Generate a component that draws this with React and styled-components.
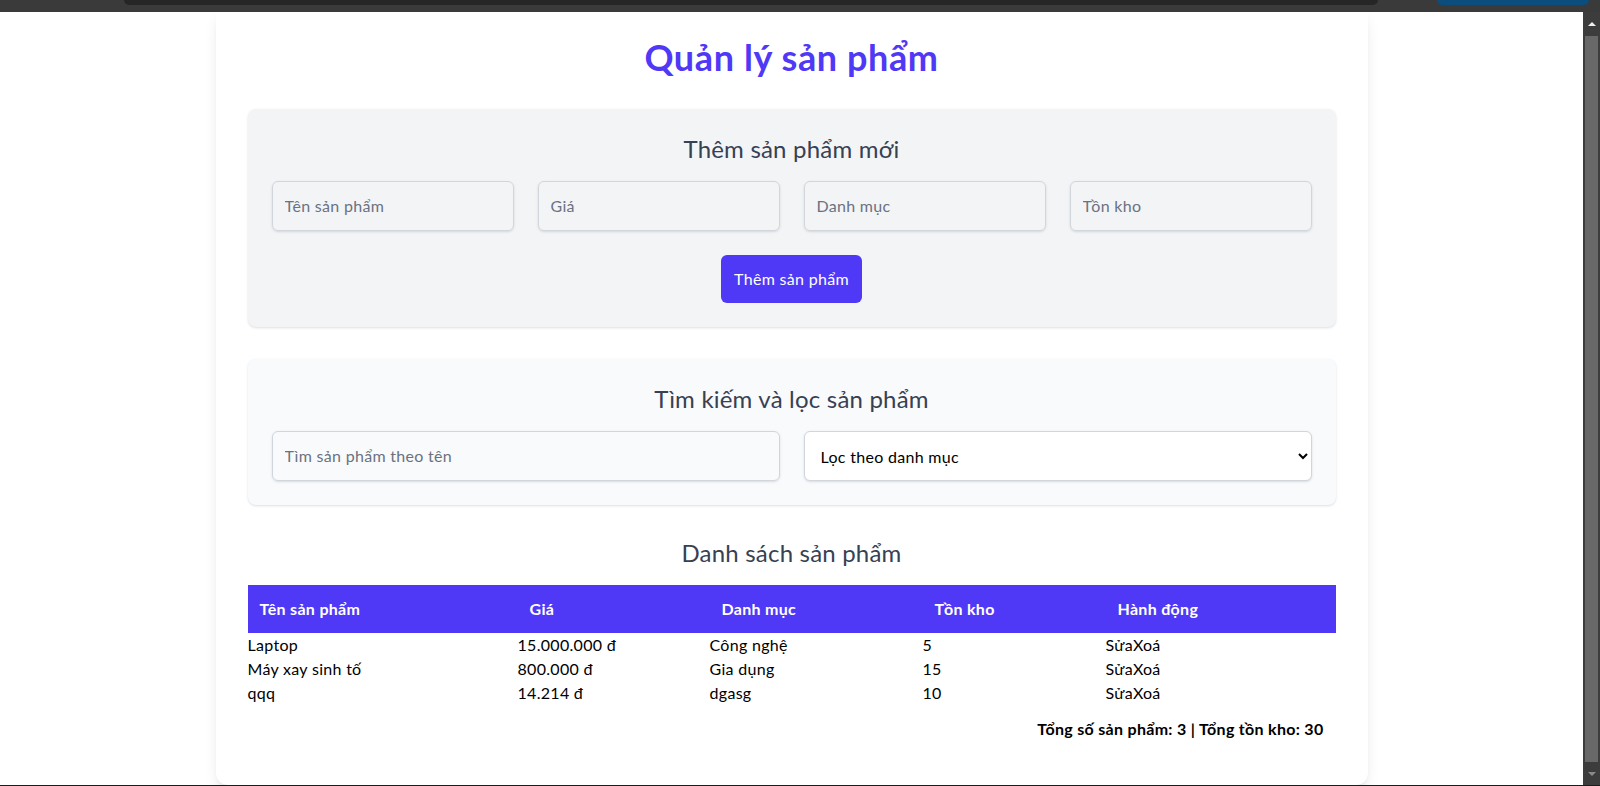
import React, { useState } from "react";
import styled, { createGlobalStyle } from "styled-components";

const GlobalStyle = createGlobalStyle`
  html, body {
    margin: 0;
    padding: 0;
    background: #ffffff;
    overflow: hidden;
  }
  body {
    font-family: Lato, "Noto Sans", sans-serif;
    color: #000;
    padding-right: 17px;
    letter-spacing: 0.3px;
  }
  * {
    box-sizing: border-box;
  }
`;

// browser window chrome: band on top, scrollbar on the right, edge at the bottom
const ChromeBar = styled.div`
  position: fixed;
  top: 0;
  left: 0;
  right: 0;
  height: 12px;
  background: #3a3a3a;
  z-index: 10;
`;
const AddressBar = styled.div`
  position: absolute;
  top: 0;
  left: 124px;
  width: 1254px;
  height: 5px;
  background: #262626;
  border-radius: 0 0 8px 8px;
`;
const ProfilePill = styled.div`
  position: absolute;
  top: 0;
  left: 1437px;
  width: 152px;
  height: 5px;
  background: #0b4d7c;
  border-radius: 0 0 10px 10px;
`;
const Scrollbar = styled.div`
  position: fixed;
  top: 12px;
  right: 0;
  bottom: 0;
  width: 17px;
  background: #3c3c3c;
  display: flex;
  flex-direction: column;
  align-items: center;
  z-index: 10;
`;
const Arrow = styled.div`
  height: 24px;
  display: flex;
  align-items: center;
  justify-content: center;
  &::after {
    content: "";
    border-left: 4px solid transparent;
    border-right: 4px solid transparent;
    ${p =>
      p.$down
        ? "border-top: 4px solid #8a8a8a;"
        : "border-bottom: 4px solid #f0f0f0;"}
  }
`;
const Thumb = styled.div`
  flex: 1;
  width: 13px;
  background: #686868;
`;
const WindowEdge = styled.div`
  position: fixed;
  left: 0;
  right: 0;
  bottom: 0;
  height: 1px;
  background: #1c1c1c;
  z-index: 11;
`;

const Card = styled.div`
  max-width: 1152px;
  margin: 5px auto 32px;
  padding: 32px;
  background: #fff;
  border-radius: 12px;
  box-shadow: 0 10px 15px -3px rgba(0, 0, 0, 0.1),
    0 4px 6px -4px rgba(0, 0, 0, 0.1);
`;
const Title = styled.h1`
  margin: 0 0 32px;
  font-size: 36px;
  line-height: 40px;
  font-weight: 700;
  letter-spacing: 0.6px;
  text-align: center;
  color: #4f39f6;
`;
const Panel = styled.section`
  background: ${p => (p.$light ? "#f9fafb" : "#f3f4f6")};
  padding: 24px;
  border-radius: 8px;
  margin-bottom: 32px;
  box-shadow: 0 1px 3px 0 rgba(0, 0, 0, 0.1), 0 1px 2px -1px rgba(0, 0, 0, 0.1);
`;
const Heading = styled.h2`
  margin: 0 0 16px;
  font-size: 24px;
  line-height: 32px;
  font-weight: 400;
  letter-spacing: 0.2px;
  text-align: center;
  color: #364153;
`;
const FieldGrid = styled.div`
  display: grid;
  grid-template-columns: repeat(${p => p.$cols}, 1fr);
  gap: 24px;
`;
const Field = styled.input`
  width: 100%;
  padding: 12px;
  font: inherit;
  font-size: 16px;
  line-height: 24px;
  letter-spacing: 0.3px;
  color: #000;
  background: transparent;
  border: 1px solid #d1d5dc;
  border-radius: 6px;
  box-shadow: 0 1px 3px 0 rgba(0, 0, 0, 0.1), 0 1px 2px -1px rgba(0, 0, 0, 0.1);
  outline: none;
  &::placeholder {
    color: #6a7282;
  }
`;
const Select = styled.select`
  width: 100%;
  height: 50px;
  padding: 0 8px 0 12px;
  font: inherit;
  font-size: 16px;
  letter-spacing: 0.3px;
  color: #000;
  background: #fff;
  border: 1px solid #d1d5dc;
  border-radius: 6px;
  box-shadow: 0 1px 3px 0 rgba(0, 0, 0, 0.1), 0 1px 2px -1px rgba(0, 0, 0, 0.1);
  outline: none;
`;
const ButtonRow = styled.div`
  display: flex;
  justify-content: center;
  margin-top: 24px;
`;
const AddButton = styled.button`
  padding: 12px 13px;
  font: inherit;
  font-size: 16px;
  line-height: 24px;
  letter-spacing: 0.3px;
  color: #fff;
  background: #4f39f6;
  border: none;
  border-radius: 6px;
  cursor: pointer;
`;
const Table = styled.table`
  width: 100%;
  border-collapse: collapse;
  table-layout: fixed;
  font-size: 16px;
`;
const HeadRow = styled.tr`
  background: #4f39f6;
  color: #fff;
`;
const Th = styled.th`
  width: ${p => p.$w}px;
  padding: 12px;
  text-align: left;
  font-weight: 700;
  line-height: 24px;
`;
const Td = styled.td`
  padding: 0;
  line-height: 24px;
  white-space: nowrap;
`;
const Summary = styled.div`
  padding: 12px;
  text-align: right;
  font-weight: 700;
  line-height: 24px;
`;

const columns = [
  { label: "Tên sản phẩm", w: 270 },
  { label: "Giá", w: 192 },
  { label: "Danh mục", w: 213 },
  { label: "Tồn kho", w: 183 },
  { label: "Hành động", w: 230 },
];

const initialProducts = [
  { name: "Laptop", price: 15000000, category: "Công nghệ", stock: 5 },
  { name: "Máy xay sinh tố", price: 800000, category: "Gia dụng", stock: 15 },
  { name: "qqq", price: 14214, category: "dgasg", stock: 10 },
];

const formatPrice = n => n.toLocaleString("de-DE") + " đ";

export default function App() {
  const [products] = useState(initialProducts);
  const totalStock = products.reduce((s, p) => s + p.stock, 0);

  return (
    <>
      <GlobalStyle />
      <ChromeBar>
        <AddressBar />
        <ProfilePill />
      </ChromeBar>
      <Card>
        <Title>Quản lý sản phẩm</Title>

        <Panel>
          <Heading>Thêm sản phẩm mới</Heading>
          <FieldGrid $cols={4}>
            <Field placeholder="Tên sản phẩm" />
            <Field placeholder="Giá" />
            <Field placeholder="Danh mục" />
            <Field placeholder="Tồn kho" />
          </FieldGrid>
          <ButtonRow>
            <AddButton>Thêm sản phẩm</AddButton>
          </ButtonRow>
        </Panel>

        <Panel $light>
          <Heading>Tìm kiếm và lọc sản phẩm</Heading>
          <FieldGrid $cols={2}>
            <Field placeholder="Tìm sản phẩm theo tên" />
            <Select defaultValue="">
              <option value="">Lọc theo danh mục</option>
              <option>Công nghệ</option>
              <option>Gia dụng</option>
            </Select>
          </FieldGrid>
        </Panel>

        <Heading>Danh sách sản phẩm</Heading>
        <Table>
          <thead>
            <HeadRow>
              {columns.map(c => (
                <Th key={c.label} $w={c.w}>
                  {c.label}
                </Th>
              ))}
            </HeadRow>
          </thead>
          <tbody>
            {products.map(p => (
              <tr key={p.name}>
                <Td>{p.name}</Td>
                <Td>{formatPrice(p.price)}</Td>
                <Td>{p.category}</Td>
                <Td>{p.stock}</Td>
                <Td>
                  <span>Sửa</span>
                  <span>Xoá</span>
                </Td>
              </tr>
            ))}
          </tbody>
        </Table>
        <Summary>
          Tổng số sản phẩm: {products.length} | Tổng tồn kho: {totalStock}
        </Summary>
      </Card>
      <Scrollbar>
        <Arrow />
        <Thumb />
        <Arrow $down />
      </Scrollbar>
      <WindowEdge />
    </>
  );
}
